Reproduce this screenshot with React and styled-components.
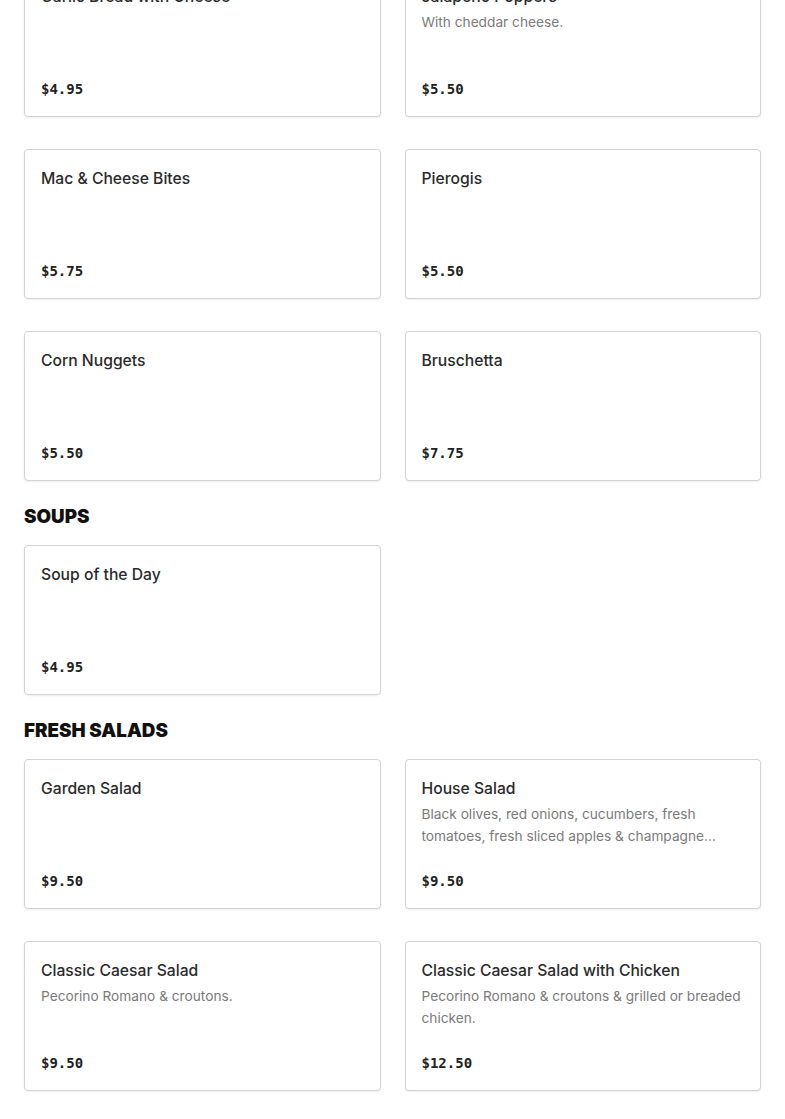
import React from "react";
import styled, { createGlobalStyle } from "styled-components";

const Global = createGlobalStyle`
  html, body { margin: 0; padding: 0; background: #fff; }
  body { font-family: Inter, "Noto Sans", sans-serif; color: #2b2b2b; }
  * { box-sizing: border-box; }
`;

const Page = styled.main`
  padding: 0 24px;
  margin-top: -97px;
`;

const Section = styled.section`
  display: flex;
  flex-direction: column;
`;

const Heading = styled.h2`
  margin: 24px 0 16px;
  font-family: Inter, sans-serif;
  font-weight: 900;
  font-size: 18.8px;
  line-height: 24px;
  color: #111;
  text-transform: uppercase;
`;

const Grid = styled.div`
  display: grid;
  grid-template-columns: 1fr 1fr;
  column-gap: 24px;
  row-gap: 32px;
`;

const Card = styled.article`
  height: 150px;
  display: flex;
  flex-direction: column;
  padding: 16px;
  border: 1px solid #d4d4d4;
  border-radius: 4px;
  box-shadow: 0 1px 2px rgba(0, 0, 0, 0.08);
  background: #fff;
`;

const Title = styled.h3`
  margin: 1px 0 0;
  font-size: 15.7px;
  line-height: 24px;
  font-weight: 500;
  color: #2a2a2a;
`;

const Desc = styled.p`
  margin: 2px 0 0;
  font-size: 13.7px;
  line-height: 22px;
  color: #7a7a7a;
  display: -webkit-box;
  -webkit-line-clamp: 2;
  -webkit-box-orient: vertical;
  overflow: hidden;
`;

const Price = styled.div`
  margin-top: auto;
  font-family: "DejaVu Sans Mono", "Liberation Mono", monospace;
  font-weight: bold;
  font-size: 14px;
  line-height: 22px;
  color: #222;
`;

const sections = [
  {
    name: "Appetizers",
    items: [
      { title: "Garlic Bread with Cheese", price: "$4.95" },
      { title: "Jalapeño Poppers", desc: "With cheddar cheese.", price: "$5.50" },
      { title: "Mac & Cheese Bites", price: "$5.75" },
      { title: "Pierogis", price: "$5.50" },
      { title: "Corn Nuggets", price: "$5.50" },
      { title: "Bruschetta", price: "$7.75" },
    ],
  },
  {
    name: "Soups",
    items: [{ title: "Soup of the Day", price: "$4.95" }],
  },
  {
    name: "Fresh Salads",
    items: [
      { title: "Garden Salad", price: "$9.50" },
      {
        title: "House Salad",
        desc: "Black olives, red onions, cucumbers, fresh tomatoes, fresh sliced apples & champagne vinaigrette dressing.",
        price: "$9.50",
      },
      { title: "Classic Caesar Salad", desc: "Pecorino Romano & croutons.", price: "$9.50" },
      {
        title: "Classic Caesar Salad with Chicken",
        desc: "Pecorino Romano & croutons & grilled or breaded chicken.",
        price: "$12.50",
      },
      { title: "Greek Salad", price: "$10.50" },
      { title: "Chef Salad", price: "$11.50" },
    ],
  },
];

export default function App() {
  return (
    <>
      <Global />
      <Page>
        {sections.map((s) => (
          <Section key={s.name}>
            <Heading>{s.name}</Heading>
            <Grid>
              {s.items.map((it) => (
                <Card key={it.title}>
                  <Title>{it.title}</Title>
                  {it.desc && <Desc>{it.desc}</Desc>}
                  <Price>{it.price}</Price>
                </Card>
              ))}
            </Grid>
          </Section>
        ))}
      </Page>
    </>
  );
}
